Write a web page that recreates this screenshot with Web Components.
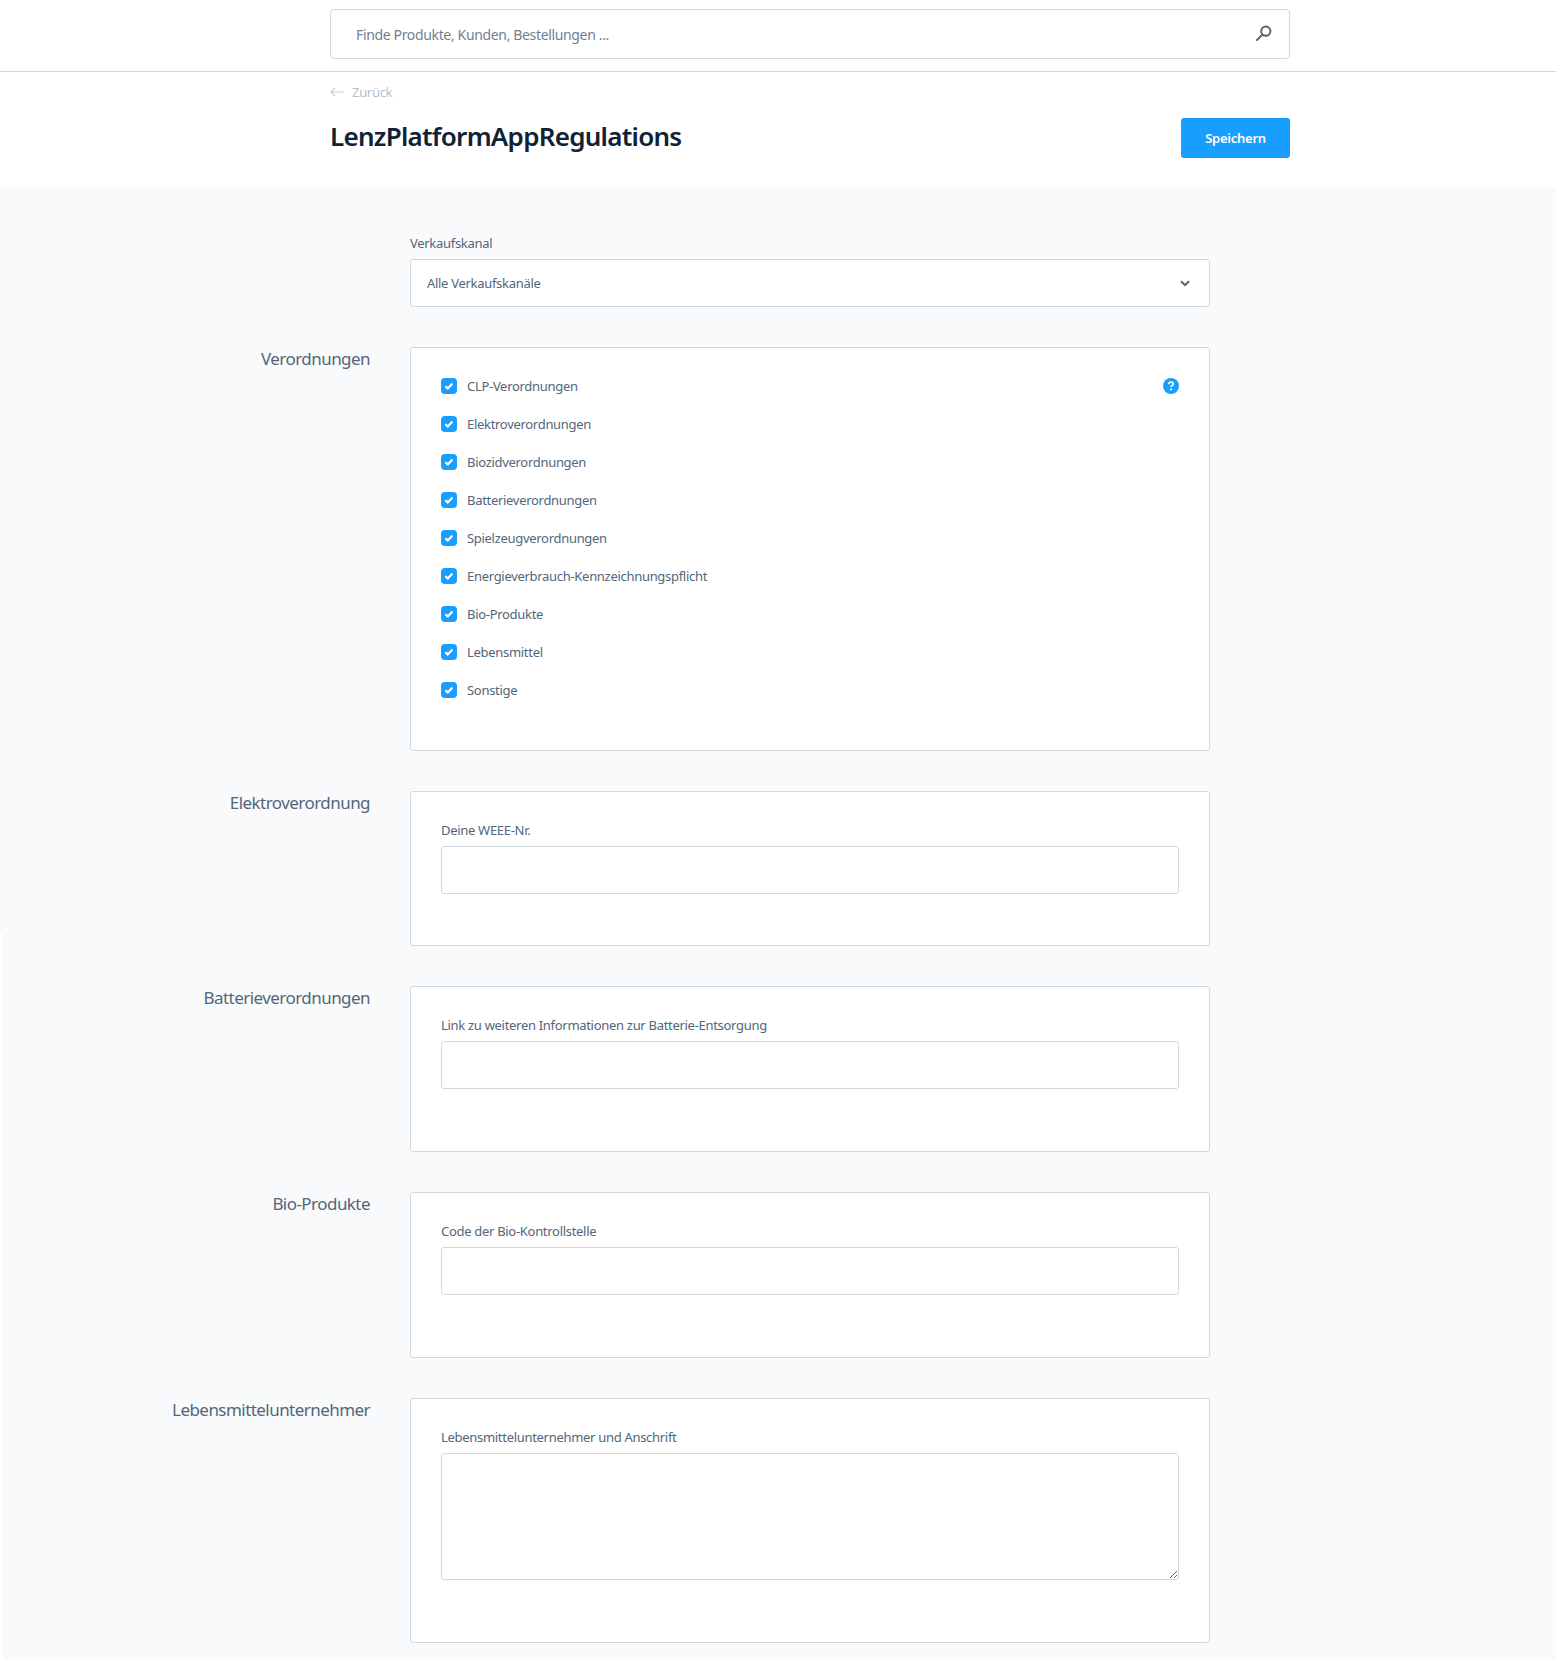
<!DOCTYPE html>
<html lang="de">
<head>
<meta charset="utf-8">
<title>LenzPlatformAppRegulations</title>
<style>
  html, body { margin: 0; background: #f9fafb; }
  body { font-family: "Noto Sans", "Liberation Sans", sans-serif; color: #52667a; }
</style>
</head>
<body>
<app-search-bar>Finde Produkte, Kunden, Bestellungen ...</app-search-bar>
<app-page-head back="Zurück" heading="LenzPlatformAppRegulations">Speichern</app-page-head>
<app-content>
  <app-select label="Verkaufskanal">Alle Verkaufskanäle</app-select>

  <app-section heading="Verordnungen" style="--tail: 30px">
    <app-check help>CLP-Verordnungen</app-check>
    <app-check>Elektroverordnungen</app-check>
    <app-check>Biozidverordnungen</app-check>
    <app-check>Batterieverordnungen</app-check>
    <app-check>Spielzeugverordnungen</app-check>
    <app-check>Energieverbrauch-Kennzeichnungspflicht</app-check>
    <app-check>Bio-Produkte</app-check>
    <app-check>Lebensmittel</app-check>
    <app-check>Sonstige</app-check>
  </app-section>

  <app-section heading="Elektroverordnung" style="--tail: 51px">
    <app-field label="Deine WEEE-Nr."></app-field>
  </app-section>

  <app-section heading="Batterieverordnungen" style="--tail: 62px">
    <app-field label="Link zu weiteren Informationen zur Batterie-Entsorgung"></app-field>
  </app-section>

  <app-section heading="Bio-Produkte" style="--tail: 62px">
    <app-field label="Code der Bio-Kontrollstelle"></app-field>
  </app-section>

  <app-section heading="Lebensmittelunternehmer" style="--tail: 62px">
    <app-field label="Lebensmittelunternehmer und Anschrift" multiline></app-field>
  </app-section>
</app-content>

<script>
// shared text look, the reference font is narrow so it gets squeezed a bit
const baseFont = `"Noto Sans", "Liberation Sans", sans-serif`;

function shadow(el, html) {
  el.attachShadow({ mode: 'open' }).innerHTML = html;
}

class AppSearchBar extends HTMLElement {
  constructor() {
    super();
    shadow(this, `
      <style>
        :host { display: block; background: #fff; border-bottom: 1px solid #d1d9e0; padding: 9px 0 11px; height: 51px; }
        .box {
          margin-left: 330px; width: 916px; height: 48px;
          display: flex; align-items: center; justify-content: space-between;
          border: 1px solid #d1d9e0; border-radius: 4px; background: #fff;
          padding: 0 17px 0 25px;
        }
        .text { font: 14px/20px ${baseFont}; letter-spacing: -0.35px; color: #707f8f; margin-top: 1px; }
        svg { display: block; margin-top: -3px; }
      </style>
      <div class="box">
        <span class="text"><slot></slot></span>
        <svg width="16" height="16" viewBox="0 0 16 16" fill="none" stroke="#52667a" stroke-width="2">
          <circle cx="9.8" cy="6.2" r="4.6"/>
          <path d="M6.4 9.6 1 15" stroke-linecap="round"/>
        </svg>
      </div>
    `);
  }
}

class AppPageHead extends HTMLElement {
  constructor() {
    super();
    const back = this.getAttribute('back');
    const heading = this.getAttribute('heading');
    shadow(this, `
      <style>
        :host { display: block; background: #fff; height: 115px; padding-left: 330px; box-sizing: border-box; }
        .inner { width: 960px; }
        .back {
          display: flex; align-items: center; gap: 8px; height: 20px; padding-top: 10px;
          font: 13px/20px ${baseFont}; letter-spacing: -0.3px; color: #b3bfcc;
        }
        .row { display: flex; justify-content: space-between; align-items: center; margin-top: 16px; height: 40px; }
        h1 { margin: -4px 0 0; font: 600 26px/40px ${baseFont}; letter-spacing: -0.73px; color: #0f2236; }
        button {
          width: 109px; height: 40px; border: 0; border-radius: 3px; background: #189eff; color: #fff;
          font: 600 13px/20px ${baseFont}; letter-spacing: -0.25px; padding: 0;
        }
      </style>
      <div class="inner">
        <div class="back">
          <svg width="14" height="10" viewBox="0 0 14 10" fill="none" stroke="#c5ced8" stroke-width="1.2">
            <path d="M14 5H1M5 1 1 5l4 4"/>
          </svg>
          <span>${back}</span>
        </div>
        <div class="row">
          <h1>${heading}</h1>
          <button><slot></slot></button>
        </div>
      </div>
    `);
  }
}

class AppContent extends HTMLElement {
  constructor() {
    super();
    shadow(this, `
      <style>
        :host { display: block; position: relative; padding: 47px 0 17px 410px; background: #f9fafb; }
        .edge { position: absolute; left: 0; top: 746px; bottom: 0; width: 3px; background: #fff; }
        .col { width: 800px; display: flex; flex-direction: column; gap: 40px; }
      </style>
      <div class="edge"></div>
      <div class="col"><slot></slot></div>
    `);
  }
}

class AppSelect extends HTMLElement {
  constructor() {
    super();
    shadow(this, `
      <style>
        :host { display: block; }
        label { display: block; height: 25px; font: 13px/18px ${baseFont}; letter-spacing: -0.3px; color: #52667a; }
        .box {
          height: 46px; display: flex; align-items: center; justify-content: space-between;
          border: 1px solid #d1d9e0; border-radius: 3px; background: #fff;
          padding: 0 19px 0 16px; font: 13px/20px ${baseFont}; letter-spacing: -0.3px; color: #52667a;
        }
      </style>
      <label>${this.getAttribute('label')}</label>
      <div class="box">
        <span><slot></slot></span>
        <svg width="10" height="7" viewBox="0 0 10 7" fill="none" stroke="#52667a" stroke-width="2"><path d="M1 1.2 5 5.2l4-4"/></svg>
      </div>
    `);
  }
}

class AppSection extends HTMLElement {
  constructor() {
    super();
    shadow(this, `
      <style>
        :host { display: block; position: relative; }
        h2 {
          position: absolute; right: calc(100% + 40px); top: 0; margin: 0; white-space: nowrap;
          font: 400 17px/24px ${baseFont}; letter-spacing: -0.55px; color: #52667a;
        }
        .card {
          border: 1px solid #d1d9e0; border-radius: 3px; background: #fff;
          padding: 30px 30px var(--tail, 30px);
        }
      </style>
      <h2>${this.getAttribute('heading')}</h2>
      <div class="card"><slot></slot></div>
    `);
  }
}

class AppCheck extends HTMLElement {
  constructor() {
    super();
    const help = this.hasAttribute('help') ? `
      <svg class="help" width="16" height="16" viewBox="0 0 16 16">
        <circle cx="8" cy="8" r="8" fill="#189eff"/>
        <path d="M5.8 6.2C5.9 4.9 6.8 4.2 8 4.2s2.2.7 2.2 1.8c0 1.6-2.2 1.6-2.2 3.1" fill="none" stroke="#fff" stroke-width="1.7"/>
        <circle cx="8" cy="11.5" r="1.1" fill="#fff"/>
      </svg>` : '';
    shadow(this, `
      <style>
        :host { display: flex; align-items: center; height: 16px; margin-bottom: 22px; font: 13px/20px ${baseFont}; letter-spacing: -0.3px; color: #52667a; }
        .box { flex: none; width: 16px; height: 16px; border-radius: 4px; background: #189eff; display: flex; align-items: center; justify-content: center; margin-right: 10px; }
        .help { margin-left: auto; }
      </style>
      <span class="box">
        <svg width="10" height="8" viewBox="0 0 10 8" fill="none" stroke="#fff" stroke-width="2.2"><path d="M1.4 4.2 3.8 6.4 8.4 1.6"/></svg>
      </span>
      <span><slot></slot></span>
      ${help}
    `);
  }
}

class AppField extends HTMLElement {
  constructor() {
    super();
    const control = this.hasAttribute('multiline') ? '<textarea></textarea>' : '<input type="text">';
    shadow(this, `
      <style>
        :host { display: block; }
        label { display: block; height: 25px; margin-top: -1px; font: 13px/18px ${baseFont}; letter-spacing: -0.3px; color: #52667a; }
        input, textarea {
          display: block; width: 100%; box-sizing: border-box; margin: 0;
          border: 1px solid #d1d9e0; border-radius: 3px; background: #fff; outline: 0;
        }
        input { height: 48px; }
        textarea { height: 127px; resize: vertical; }
      </style>
      <label>${this.getAttribute('label')}</label>
      ${control}
    `);
  }
}

customElements.define('app-search-bar', AppSearchBar);
customElements.define('app-page-head', AppPageHead);
customElements.define('app-content', AppContent);
customElements.define('app-select', AppSelect);
customElements.define('app-section', AppSection);
customElements.define('app-check', AppCheck);
customElements.define('app-field', AppField);
</script>
</body>
</html>
